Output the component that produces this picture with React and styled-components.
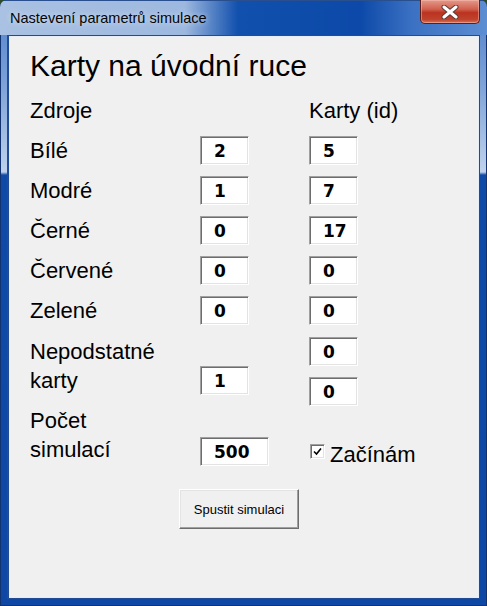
import React from 'react';
import styled, { createGlobalStyle } from 'styled-components';

const GlobalStyle = createGlobalStyle`
  html, body {
    margin: 0;
    padding: 0;
    background: #2d4a2a;
  }
  body {
    font-family: "Liberation Sans", Arial, sans-serif;
  }
`;

const Window = styled.div`
  width: 487px;
  height: 606px;
  box-sizing: border-box;
  display: flex;
  flex-direction: column;
  padding: 0 7px 7px;
  border-radius: 7px 7px 0 0;
  overflow: hidden;
  background: linear-gradient(180deg, #4f80cb 0, #7aa0d7 80px, #bfd2ec 172px, #0f4aa6 175px, #0e48a4 100%);
  box-shadow: inset 0 0 0 1px #12336e;
`;

const TitleBar = styled.div`
  height: 35px;
  margin: 0 -7px;
  padding-left: 10px;
  display: flex;
  align-items: flex-start;
  box-sizing: border-box;
  border-top: 1px solid #2a4f8e;
  background:
    linear-gradient(90deg, #a9c1e2 0, #9db8df 185px, #1150ad 238px, #0c49a8 360px, #3a70c2 410px, #5d8dd2 487px);
`;

const TitleText = styled.span`
  padding-top: 7px;
  font-size: 14.5px;
  line-height: 20px;
  color: #050505;
  text-shadow: 0 0 6px rgba(230, 240, 252, 0.9);
`;

const CloseButton = styled.div`
  margin-left: auto;
  margin-right: 7px;
  margin-top: -1px;
  width: 60px;
  height: 24px;
  box-sizing: border-box;
  display: flex;
  align-items: center;
  justify-content: center;
  border: 1px solid #5a1f1a;
  border-top: none;
  border-radius: 0 0 5px 5px;
  background: linear-gradient(180deg, #e39a8a 0, #d2604f 40%, #bb3320 55%, #c0432c 85%, #d8735a 100%);
  box-shadow: inset 0 0 0 1px rgba(255, 200, 190, 0.45);
`;

const Client = styled.div`
  flex: 1;
  display: flex;
  flex-direction: column;
  padding: 12px 0 0 21px;
  background: #f0f0f0;
  border: 1px solid #1f4c94;
  border-left-width: 2px;
  box-shadow: inset 0 0 0 1px #e6edf7;
`;

const Heading = styled.h1`
  margin: 0;
  font-size: 30px;
  line-height: 36px;
  font-weight: normal;
  color: #000;
`;

const Form = styled.div`
  display: flex;
  flex-direction: column;
`;

const Row = styled.div`
  display: grid;
  grid-template-columns: 170px 109px auto;
  align-items: start;
  margin-top: ${p => (p.$mt ?? 11)}px;
`;

const Label = styled.div`
  font-size: 22px;
  line-height: 29px;
  color: #000;
`;

const Cell = styled.div`
  display: flex;
  flex-direction: column;
  gap: 11px;
  margin-top: ${p => p.$mt || 0}px;
`;

const NumberBox = styled.div`
  width: ${p => p.$w || 49}px;
  height: 29px;
  box-sizing: border-box;
  padding-left: 13px;
  background: #fff;
  border: 1px solid;
  border-color: #a0a0a0 #fff #fff #a0a0a0;
  box-shadow: inset 1px 1px 0 #6d6d6d, inset -1px -1px 0 #e3e3e3;
  font-family: "DejaVu Sans", Tahoma, sans-serif;
  font-weight: bold;
  font-size: 17px;
  line-height: 28px;
  color: #000;
`;

const CheckCell = styled.label`
  display: flex;
  align-items: center;
  height: 29px;
  margin-top: 31px;
  margin-left: 1px;
  gap: 5px;
`;

const CheckBox = styled.span`
  width: 15px;
  height: 15px;
  box-sizing: border-box;
  display: flex;
  align-items: center;
  justify-content: center;
  background: #fff;
  border: 1px solid;
  border-color: #a0a0a0 #fff #fff #a0a0a0;
  box-shadow: inset 1px 1px 0 #6d6d6d, inset -1px -1px 0 #e3e3e3;
`;

const CheckText = styled.span`
  padding-top: 6px;
  font-size: 22px;
  line-height: 29px;
  color: #000;
`;

const ButtonRow = styled.div`
  display: flex;
  margin-top: 23px;
  padding-left: 149px;
`;

const Button = styled.button`
  width: 120px;
  height: 40px;
  box-sizing: border-box;
  padding: 0;
  background: #f0f0f0;
  border: 1px solid;
  border-color: #fff #6d6d6d #6d6d6d #fff;
  box-shadow: inset -1px -1px 0 #a0a0a0, inset 1px 1px 0 #e3e3e3;
  font-family: "Liberation Sans", Arial, sans-serif;
  font-size: 13px;
  color: #000;
`;

const resources = [
  { name: 'Bílé', count: 2, card: 5 },
  { name: 'Modré', count: 1, card: 7 },
  { name: 'Černé', count: 0, card: 17 },
  { name: 'Červené', count: 0, card: 0 },
  { name: 'Zelené', count: 0, card: 0 },
];

const App = () => {
  return (
    <>
      <GlobalStyle />
      <Window>
        <TitleBar>
          <TitleText>Nastevení parametrů simulace</TitleText>
          <CloseButton>
            <svg width="18" height="14" viewBox="0 0 18 14">
              <path d="M3 2 L15 12 M15 2 L3 12" stroke="#5b3b36" strokeWidth="5" strokeLinecap="round" />
              <path d="M3 2 L15 12 M15 2 L3 12" stroke="#fff" strokeWidth="3" strokeLinecap="round" />
            </svg>
          </CloseButton>
        </TitleBar>
        <Client>
          <Heading>Karty na úvodní ruce</Heading>
          <Form>
            <Row $mt={12}>
              <Label>Zdroje</Label>
              <div />
              <Label>Karty (id)</Label>
            </Row>
            {resources.map(r => (
              <Row key={r.name}>
                <Label>{r.name}</Label>
                <NumberBox>{r.count}</NumberBox>
                <NumberBox>{r.card}</NumberBox>
              </Row>
            ))}
            <Row $mt={12}>
              <Label>Nepodstatné<br />karty</Label>
              <Cell $mt={29}>
                <NumberBox>1</NumberBox>
              </Cell>
              <Cell>
                <NumberBox>0</NumberBox>
                <NumberBox>0</NumberBox>
              </Cell>
            </Row>
            <Row $mt={0}>
              <Label>Počet<br />simulací</Label>
              <Cell $mt={31}>
                <NumberBox $w={69}>500</NumberBox>
              </Cell>
              <CheckCell>
                <CheckBox>
                  <svg width="9" height="9" viewBox="0 0 9 9">
                    <path d="M1 4.5 L3.5 7 L8 1.5" stroke="#000" strokeWidth="1.6" fill="none" />
                  </svg>
                </CheckBox>
                <CheckText>Začínám</CheckText>
              </CheckCell>
            </Row>
          </Form>
          <ButtonRow>
            <Button>Spustit simulaci</Button>
          </ButtonRow>
        </Client>
      </Window>
    </>
  );
};

export default App;
